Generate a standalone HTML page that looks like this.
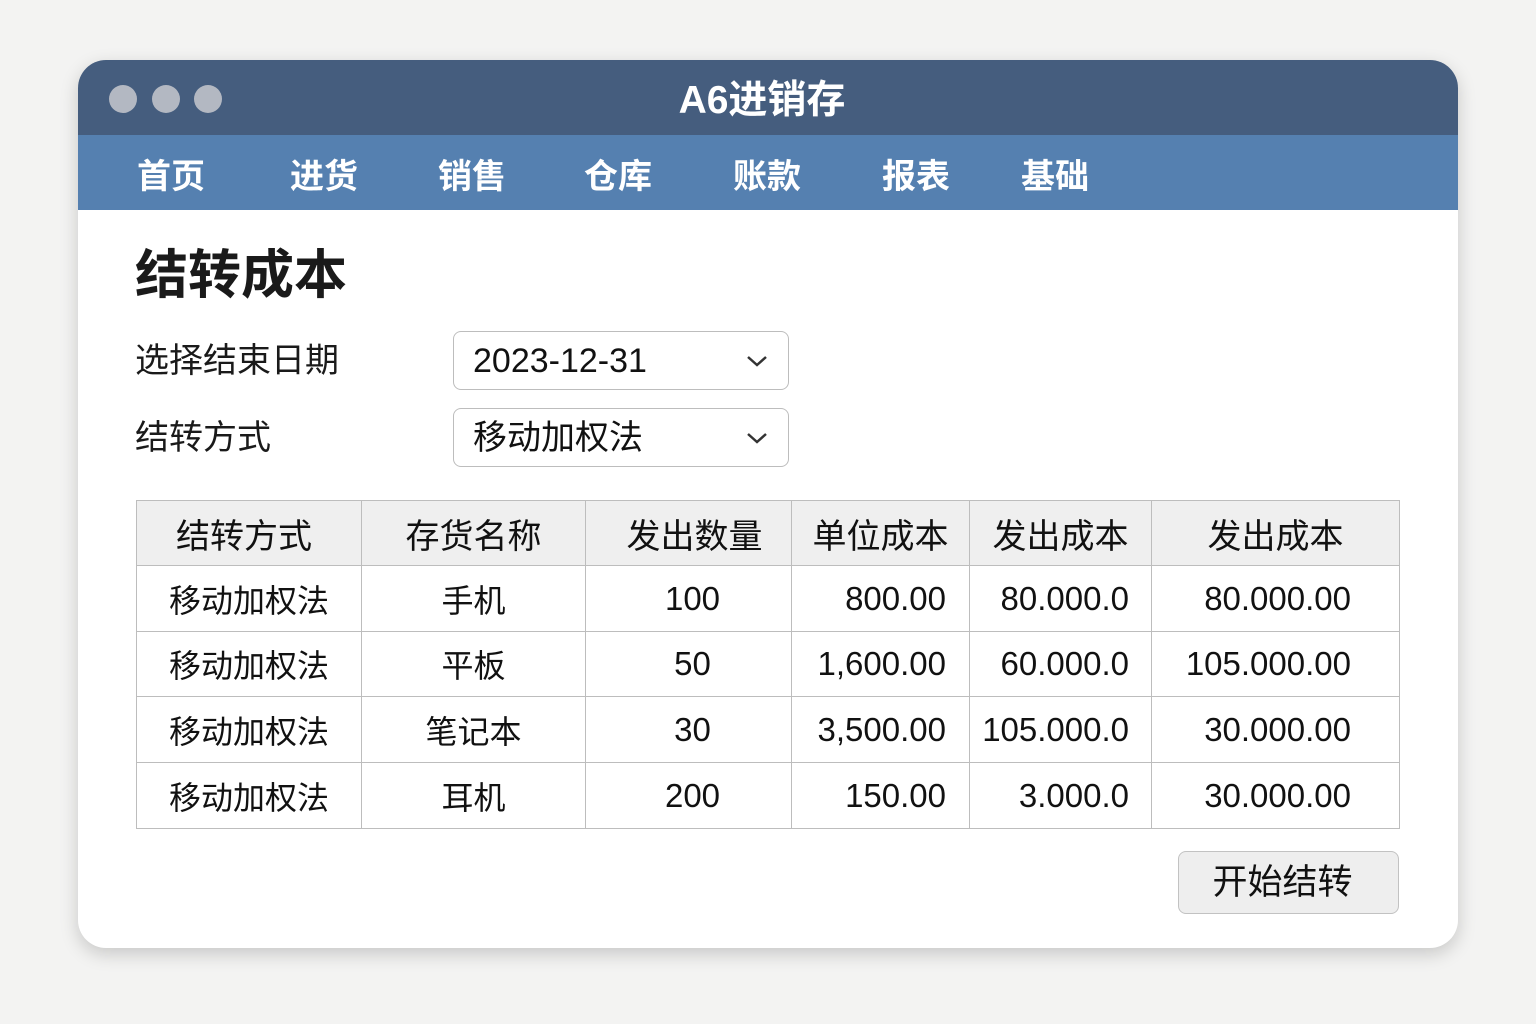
<!DOCTYPE html>
<html><head><meta charset="utf-8"><style>
body{margin:0;width:1536px;height:1024px;background:#f3f3f2;font-family:"Liberation Sans","Noto Sans CJK SC",sans-serif;position:relative;overflow:hidden}
.win{position:absolute;left:78px;top:60px;width:1380px;height:888px;background:#fff;border-radius:28px;overflow:hidden;box-shadow:0 6px 18px rgba(0,0,0,.18)}
.tb{position:absolute;left:0;top:0;width:100%;height:75px;background:#455d7e}
.dot{position:absolute;top:25px;width:28px;height:28px;border-radius:50%;background:#b3b8c2}
.title{position:absolute;left:0;width:100%;top:18px;text-align:center;color:#fff;font-size:39px;line-height:46px;font-weight:bold;padding-right:12px;box-sizing:border-box}
.nav{position:absolute;left:0;top:75px;width:100%;height:75px;background:#5580b0}
.nav span{position:absolute;top:20px;color:#fff;font-size:34px;font-weight:bold;line-height:44px}
.abs{position:absolute;color:#1a1a1a}
.sel{position:absolute;left:375px;width:336px;border:1.5px solid #bdbdbd;border-radius:8px;background:#fff;font-size:34px;line-height:58px;box-sizing:border-box;padding-left:19px;color:#111}
.sel svg{position:absolute;right:20px;top:22px}
table{position:absolute;left:58px;top:440px;width:1263px;table-layout:fixed;border-collapse:collapse;font-size:32px;color:#111}
td,th{border:1.5px solid #bdbdbd;padding:0;font-weight:normal;box-sizing:border-box}
tr{height:65.5px}
th{background:#efefef;font-size:34px}
td.r,td.n{font-size:33px}
.r{text-align:right}
.c{text-align:center}
.btn{position:absolute;left:1100px;top:791px;width:221px;height:63px;box-sizing:border-box;border:1.5px solid #c2c2c2;border-radius:8px;background:#eeeeee;text-align:center;font-size:35px;line-height:62px;color:#111;padding-right:12px}
</style></head><body>
<div class="win">
 <div class="tb">
  <div class="dot" style="left:31px"></div><div class="dot" style="left:74px"></div><div class="dot" style="left:116px"></div>
  <div class="title">A6进销存</div>
 </div>
 <div class="nav">
  <span style="left:59px">首页</span><span style="left:212px">进货</span><span style="left:360px">销售</span><span style="left:506px">仓库</span><span style="left:655px">账款</span><span style="left:804px">报表</span><span style="left:943px">基础</span>
 </div>
 <div class="abs" style="left:57px;top:184px;font-size:53px;font-weight:bold;line-height:64px">结转成本</div>
 <div class="abs" style="left:57px;top:279px;font-size:34px;line-height:44px">选择结束日期</div>
 <div class="abs" style="left:57px;top:356px;font-size:34px;line-height:44px">结转方式</div>
 <div class="sel" style="top:271px;height:59px">2023-12-31<svg width="22" height="14" viewBox="0 0 22 14"><path d="M2 3 L11 11 L20 3" fill="none" stroke="#333" stroke-width="2.5"/></svg></div>
 <div class="sel" style="top:348px;height:59px">移动加权法<svg width="22" height="14" viewBox="0 0 22 14"><path d="M2 3 L11 11 L20 3" fill="none" stroke="#333" stroke-width="2.5"/></svg></div>
 <table>
  <colgroup><col style="width:225px"><col style="width:224px"><col style="width:206px"><col style="width:178px"><col style="width:182px"><col style="width:248px"></colgroup>
  <tr style="height:65px"><th style="padding-right:10px">结转方式</th><th>存货名称</th><th style="padding-left:12px">发出数量</th><th>单位成本</th><th>发出成本</th><th>发出成本</th></tr>
  <tr style="height:66px"><td class="c">移动加权法</td><td class="c">手机</td><td class="c n" style="padding-left:8px">100</td><td class="r" style="padding-right:23px">800.00</td><td class="r" style="padding-right:22px">80.000.0</td><td class="r" style="padding-right:48px">80.000.00</td></tr>
  <tr style="height:65px"><td class="c">移动加权法</td><td class="c">平板</td><td class="c n" style="padding-left:8px">50</td><td class="r" style="padding-right:23px">1,600.00</td><td class="r" style="padding-right:22px">60.000.0</td><td class="r" style="padding-right:48px">105.000.00</td></tr>
  <tr style="height:66px"><td class="c">移动加权法</td><td class="c">笔记本</td><td class="c n" style="padding-left:8px">30</td><td class="r" style="padding-right:23px">3,500.00</td><td class="r" style="padding-right:22px">105.000.0</td><td class="r" style="padding-right:48px">30.000.00</td></tr>
  <tr style="height:66px"><td class="c">移动加权法</td><td class="c">耳机</td><td class="c n" style="padding-left:8px">200</td><td class="r" style="padding-right:23px">150.00</td><td class="r" style="padding-right:22px">3.000.0</td><td class="r" style="padding-right:48px">30.000.00</td></tr>
 </table>
 <div class="btn">开始结转</div>
</div>
</body></html>
